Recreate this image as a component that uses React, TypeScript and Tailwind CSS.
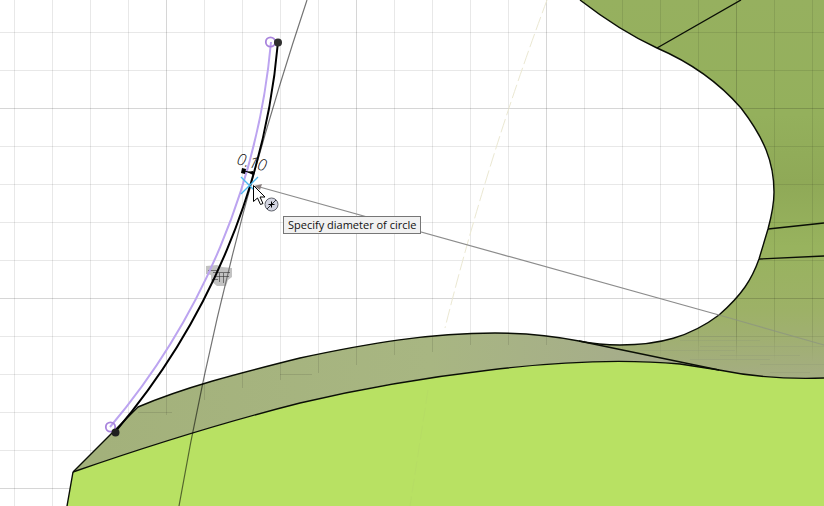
const GRID_STEP = 38;

const BODY =
  "M580 0 Q620 31 657 48 Q708 70 741 108 C764 138 774 162 774 192 C774 206 771 218 768 229 L759 259 C752 279 742 295 719 315 C690 337 659 345 620 345 Q599 345 579 341 L719 370 Q768 380 824 378 L2000 378 L2000 0 Z";
const BODY_EDGE =
  "M580 0 Q620 31 657 48 Q708 70 741 108 C764 138 774 162 774 192 C774 206 771 218 768 229 L759 259 C752 279 742 295 719 315 C690 337 659 345 620 345 Q599 345 579 341";
const TOP_EDGE =
  "M73 472 L138 407 C185 387 236 374 300 358 C370 343 430 333 495 333 Q539 333 579 341";
const LOWER_EDGE =
  "M73 472 C145 447 225 422 300 403 C372 386 430 377 490 370 C555 362 625 359 680 364 L719 370 Q768 380 824 378";

function Grid() {
  return (
    <>
      <defs>
        <pattern id="minor" x="14" y="32" width={GRID_STEP} height={GRID_STEP} patternUnits="userSpaceOnUse">
          <path d="M.5 0V38M0 .5H38" stroke="#000" strokeOpacity=".09" />
        </pattern>
        <pattern id="major" x="166" y="108" width={GRID_STEP * 5} height={GRID_STEP * 5} patternUnits="userSpaceOnUse">
          <path d="M.5 0V190M0 .5H190" stroke="#000" strokeOpacity=".08" />
        </pattern>
        <linearGradient id="gridFade" gradientUnits="userSpaceOnUse" x1="0" y1="330" x2="0" y2="362">
          <stop offset="0" stopColor="#fff" />
          <stop offset="1" stopColor="#000" />
        </linearGradient>
        <mask id="bodyMask" maskUnits="userSpaceOnUse" x="0" y="0" width="2000" height="506">
          <rect width="2000" height="506" fill="url(#gridFade)" />
        </mask>
      </defs>
      <rect width="100%" height="100%" fill="url(#minor)" />
      <rect width="100%" height="100%" fill="url(#major)" />
    </>
  );
}

function Model() {
  return (
    <g>
      <defs>
        <linearGradient id="body" gradientUnits="userSpaceOnUse" x1="0" y1="0" x2="0" y2="380">
          <stop offset="0" stopColor="#96b05f" />
          <stop offset=".3" stopColor="#94b05c" />
          <stop offset=".48" stopColor="#8fa957" />
          <stop offset=".65" stopColor="#98b35e" />
          <stop offset=".82" stopColor="#9db167" />
          <stop offset="1" stopColor="#a5ad83" />
        </linearGradient>
        <linearGradient id="shade" gradientUnits="userSpaceOnUse" x1="100" y1="0" x2="700" y2="0">
          <stop offset="0" stopColor="#a3b17b" />
          <stop offset=".55" stopColor="#a8b682" />
          <stop offset="1" stopColor="#a5aa8d" />
        </linearGradient>
        <clipPath id="bodyClip">
          <path d={BODY} />
        </clipPath>
      </defs>
      <path d={`${LOWER_EDGE} L2000 378 V2000 H67 V506 Z`} fill="#b8e163" />
      <path
        d={`${TOP_EDGE} L719 370 L680 364 C625 359 555 362 490 370 C430 377 372 386 300 403 C225 422 145 447 73 472Z`}
        fill="url(#shade)"
      />
      <path d={BODY} fill="url(#body)" />
      <g clipPath="url(#bodyClip)">
        <g mask="url(#bodyMask)">
          <rect width="2000" height="380" fill="url(#minor)" />
          <rect width="2000" height="380" fill="url(#major)" />
        </g>
        <path
          d="M680 340.5H760M700 346.5H824M640 350.5H735M720 355.5H800M690 359.5H770M760 364.5H824M700 336.5H735M770 372.5H810"
          stroke="#909878"
          strokeOpacity=".3"
        />
      </g>
      <path
        d="M166.5 396V415M204.5 384V400M242.5 373V388M280.5 363V380M318.5 354V373M356.5 346V365M394.5 340V355M432.5 336V352M470.5 334V345M508.5 333V345M546.5 335V345M138 412.5H172M280 374.5H312"
        stroke="#000"
        strokeOpacity=".1"
      />
      <g fill="none" stroke="#0a0e05" strokeWidth="1.4" strokeLinejoin="round">
        <path d={BODY_EDGE} />
        <path d={TOP_EDGE} />
        <path d={LOWER_EDGE} />
        <path d="M824 378H2000M73 472L67 506M579 341L719 370M657 48L741 0M768 229L824 223M759 259L824 256" />
      </g>
    </g>
  );
}

function Sketch() {
  return (
    <g fill="none">
      <path d="M547 0Q486 164 445 328" stroke="#ebe8d2" strokeDasharray="14 4" />
      <path d="M428 390L410 506" stroke="#b3d866" strokeDasharray="14 4" strokeOpacity=".5" />
      <path d="M307 0A3510 3510 0 0 0 179 506" stroke="#000" strokeOpacity=".55" strokeWidth="1.2" />
      <path d="M256 186L719 315" stroke="#8c8c8c" strokeWidth="1.2" />
      <path d="M719 315L824 345" stroke="#8c9480" strokeWidth="1.2" strokeOpacity=".75" />
      <path d="M254 186L262 184L260 190Z" fill="#8a8080" />
      <path
        d="M206 266L217 265L222 267L232 268V277L228 280L226 286H217L211 281V275L206 274Z"
        fill="#777"
        fillOpacity=".45"
      />
      <path
        d="M208 270.5H217M213 272.5H230M214 276.5H229M219.5 273V282M223.5 273V283M212 279.5H218"
        stroke="#333"
        strokeOpacity=".6"
      />
      <path d="M271 42A692 692 0 0 1 110 427" stroke="#bca4f0" strokeWidth="2" />
      <path d="M278 42A693 693 0 0 1 115 432" stroke="#000" strokeWidth="2" />
      <circle cx="270.5" cy="42" r="4.7" stroke="#a984dd" strokeWidth="1.8" />
      <circle cx="110.5" cy="427" r="4.7" stroke="#a984dd" strokeWidth="1.8" />
      <circle cx="278" cy="42.5" r="4" fill="#303030" />
      <circle cx="115.5" cy="432.5" r="4" fill="#202020" />
      <path d="M242 168L246 169L245 174L241 173Z" fill="#000" />
      <path d="M244 171L253 173" stroke="#000" />
      <path d="M253 171V175L247 172Z" fill="#000" />
      <path d="M241 177L258 194M258 177L241 194" stroke="#4ab7f0" strokeWidth="1.3" />
      <text
        x="236"
        y="164"
        transform="rotate(14 236 164)"
        fill="#111"
        className="font-['Open_Sans',sans-serif] text-base font-light italic"
      >
        0.10
      </text>
    </g>
  );
}

function Cursor() {
  return (
    <g>
      <circle cx="271.5" cy="204.5" r="6.5" fill="#d3d5e2" stroke="#60636c" />
      <path d="M267 209L276 200" stroke="#30343a" />
      <path d="M268.5 204.5H274.5M271.5 201.5V207.5" stroke="#000" />
      <path
        d="M253.5 185.5V201.5L257.5 198L260.5 204.5L263 203.5L260 197H265Z"
        fill="#fff"
        stroke="#000"
      />
    </g>
  );
}

export default function App() {
  return (
    <main className="relative h-screen w-full overflow-hidden bg-white">
      <svg className="block h-full w-full" role="img" aria-label="Sketch canvas">
        <Grid />
        <Model />
        <Sketch />
        <Cursor />
      </svg>
      <div
        role="tooltip"
        className="absolute top-[216px] left-[283px] border border-[#767676] bg-[#f1f1f1] px-1 font-['Open_Sans',sans-serif] text-[11px] leading-4 whitespace-nowrap text-[#101010]"
      >
        Specify diameter of circle
      </div>
    </main>
  );
}
